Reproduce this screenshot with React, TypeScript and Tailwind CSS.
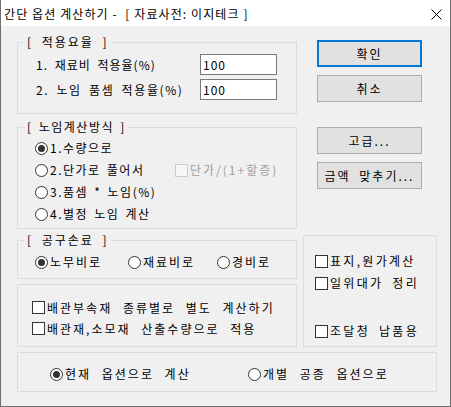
import React from "react"

const txt = "font-['Noto_Sans_CJK_KR',sans-serif] text-[12px] leading-[16px] tracking-[2px] [word-spacing:4px] text-black"

type GroupProps = {
    label?: string
    className?: string
    children?: React.ReactNode
}

function Group(props: GroupProps) {
    const { label, className, children } = props
    return (
        <div className={"relative border border-[#dcdcdc] " + (className || "")}>
            {label && (
                <span className="absolute left-[7px] top-[-9px] px-[2px] bg-[#f0f0f0] whitespace-pre">{label}</span>
            )}
            {children}
        </div>
    )
}

function Radio({ checked, label, className }: { checked?: boolean, label: string, className?: string }) {
    return (
        <div className={"flex items-center h-[22px] " + (className || "")}>
            <span className="w-[13px] h-[13px] rounded-full border border-[#333333] bg-white flex items-center justify-center shrink-0">
                {checked && <span className="w-[7px] h-[7px] rounded-full bg-[#333333]" />}
            </span>
            <span className="ml-[2px] whitespace-pre">{label}</span>
        </div>
    )
}

function Check({ label, disabled, className }: { label: string, disabled?: boolean, className?: string }) {
    return (
        <div className={"flex items-center h-[21px] " + (className || "")}>
            <span className={"w-[13px] h-[13px] border shrink-0 " + (disabled ? "border-[#cccccc] bg-[#f7f7f7]" : "border-[#333333] bg-white")} />
            <span className={"ml-[2px] whitespace-pre " + (disabled ? "text-[#a0a0a0]" : "")}>{label}</span>
        </div>
    )
}

function Btn({ text, primary, className }: { text: string, primary?: boolean, className?: string }) {
    return (
        <div className={"w-[105px] h-[27px] bg-[#e1e1e1] flex items-center justify-center whitespace-pre " + (primary ? "border-2 border-[#0078d7] " : "border border-[#adadad] ") + (className || "")}>
            {text}
        </div>
    )
}

export default function App() {
    return (
        <div className={"w-[451px] h-[407px] flex flex-col border-x border-b border-[#6e6e6e] bg-[#f0f0f0] " + txt}>

            {/* title bar */}
            <div className="h-[26px] bg-white flex items-center justify-between pl-[3px] shrink-0">
                <span className="text-[12px] tracking-[1.1px] [word-spacing:0px] whitespace-pre pt-[1px]">간단 옵션 계산하기 -  [ 자료사전: 이지테크 ]</span>
                <svg width="11" height="11" viewBox="0 0 11 11" className="mr-[8px] mt-[2px]">
                    <path d="M0.5 0.5 L10.5 10.5 M10.5 0.5 L0.5 10.5" stroke="#000" strokeWidth="1" fill="none" />
                </svg>
            </div>

            <div className="flex-1 pl-[16px]">
                <div className="flex">

                    {/* left column */}
                    <div className="flex flex-col w-[280px]">
                        <Group label="[ 적용요율 ]" className="mt-[16px] h-[72px] pt-[11px] pl-[18px]">
                            <div className="flex items-center h-[21px]">
                                <span className="w-[164px] whitespace-pre tracking-[1px] [word-spacing:3px]">1. 재료비 적용율(%)</span>
                                <div className="w-[77px] h-[21px] bg-white border border-[#7a7a7a] flex items-center pl-[2px] tracking-[1px]">100</div>
                            </div>
                            <div className="flex items-center h-[21px] mt-[4px]">
                                <span className="w-[164px] whitespace-pre tracking-[1.6px] [word-spacing:3px]">2. 노임 품셈 적용율(%)</span>
                                <div className="w-[77px] h-[21px] bg-white border border-[#7a7a7a] flex items-center pl-[2px] tracking-[1px]">100</div>
                            </div>
                        </Group>

                        <Group label="[ 노임계산방식 ]" className="mt-[13px] h-[102px] pt-[9px] pl-[17px] tracking-[1.5px] [word-spacing:2px]">
                            <Radio checked label="1.수량으로" />
                            <div className="flex items-center">
                                <Radio label="2.단가로 풀어서" className="w-[140px]" />
                                <Check disabled label="단가/(1+할증)" className="tracking-[2px]" />
                            </div>
                            <Radio label="3.품셈 * 노임(%)" />
                            <Radio label="4.별정 노임 계산" />
                        </Group>

                        <Group label="[ 공구손료 ]" className="mt-[11px] h-[39px] pt-[10px] pl-[17px]">
                            <div className="flex">
                                <Radio checked label="노무비로" className="w-[93px]" />
                                <Radio label="재료비로" className="w-[89px]" />
                                <Radio label="경비로" />
                            </div>
                        </Group>

                        <Group className="mt-[5px] h-[63px] pt-[12px] pl-[14px] [word-spacing:6px]">
                            <Check label="배관부속재 종류별로 별도 계산하기" />
                            <Check label="배관재,소모재 산출수량으로 적용" />
                        </Group>
                    </div>

                    {/* right column */}
                    <div className="flex flex-col w-[134px] ml-[6px]">
                        <Btn primary text="확인" className="mt-[14px] ml-[14px]" />
                        <Btn text="취소" className="mt-[8px] ml-[14px]" />
                        <Btn text="고급..." className="mt-[25px] ml-[14px]" />
                        <Btn text="금액 맞추기..." className="mt-[8px] ml-[14px]" />

                        <Group className="mt-[46px] h-[112px] pt-[14px] pl-[11px] tracking-[2.3px]">
                            <Check label="표지,원가계산" className="h-[22px]" />
                            <Check label="일위대가 정리" className="h-[22px]" />
                            <Check label="조달청 납품용" className="h-[22px] mt-[26px]" />
                        </Group>
                    </div>
                </div>

                <Group className="mt-[5px] w-[420px] h-[40px] pt-[10px] pl-[32px] [word-spacing:6px]">
                    <div className="flex">
                        <Radio checked label="현재 옵션으로 계산" className="w-[198px]" />
                        <Radio label="개별 공종 옵션으로" />
                    </div>
                </Group>
            </div>
        </div>
    )
}
